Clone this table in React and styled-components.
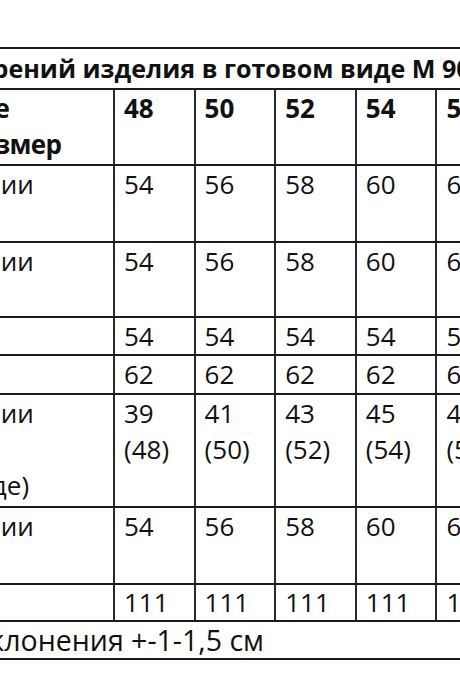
import React from "react";
import styled, { createGlobalStyle } from "styled-components";

const Global = createGlobalStyle`
  html, body { margin: 0; padding: 0; background: #fff; }
  body { overflow: hidden; width: 460px; height: 690px; }
`;

const Page = styled.div`
  width: 460px;
  height: 690px;
  overflow: hidden;
  padding-top: 47px;
  box-sizing: border-box;
`;

const Table = styled.table`
  border-collapse: collapse;
  table-layout: fixed;
  width: 807px;
  margin-left: -210px;
  font-family: "Open Sans", "Noto Sans", sans-serif;
  font-size: 26px;
  color: #111;
`;

const Cell = styled.td`
  border-top: 2px solid #1c1c1c;
  border-bottom: 2px solid #1c1c1c;
  border-left: 2px solid #2a2a2a;
  border-right: 2px solid #2a2a2a;
  padding: 0 0 ${(p) => p.$pad || 0}px 9px;
  line-height: ${(p) => p.$lh || 36}px;
  vertical-align: top;
  white-space: nowrap;
  overflow: visible;
  font-weight: ${(p) => (p.$bold ? 700 : 400)};
`;

const Wide = styled.td`
  border-top: 2px solid #1c1c1c;
  border-bottom: 2px solid #1c1c1c;
  padding: 0;
  vertical-align: top;
  white-space: nowrap;
  overflow: visible;
  text-indent: ${(p) => p.$indent}px;
`;

const TitleCell = styled(Wide)`
  font-weight: 700;
  font-size: 25.1px;
  line-height: 39px;
`;

const NoteCell = styled(Wide)`
  font-size: 28.5px;
  line-height: 36px;
`;

const Line = styled.span`
  display: block;
  letter-spacing: ${(p) => p.$ls || 0}px;
`;

const sizes = [48, 50, 52, 54, 56, 58];

const rows = [
  { label: ["Ширина по линии", "груди"], pad: 3, vals: [54, 56, 58, 60, 62, 64] },
  { label: ["Ширина по линии", "талии"], pad: 1, vals: [54, 56, 58, 60, 62, 64] },
  { label: ["Длина рукава"], pad: 0, vals: [54, 54, 54, 54, 54, 54] },
  { label: ["Длина спинки"], pad: 1, vals: [62, 62, 62, 62, 62, 62] },
  {
    label: ["Ширина по линии", "бедер", "(в закрытом виде)"],
    pad: 3,
    vals: [
      ["39", "(48)"],
      ["41", "(50)"],
      ["43", "(52)"],
      ["45", "(54)"],
      ["47", "(56)"],
      ["49", "(58)"],
    ],
  },
  { label: ["Ширина по линии", "низа"], pad: 3, vals: [54, 56, 58, 60, 62, 64] },
  { label: ["Длина изделия"], pad: 0, lh: 35, vals: [111, 111, 111, 111, 111, 111] },
];

export default function App() {
  return (
    <>
      <Global />
      <Page>
        <Table>
          <colgroup>
            <col style={{ width: 323 }} />
            {sizes.map((s) => (
              <col key={s} style={{ width: 80.6 }} />
            ))}
          </colgroup>
          <tbody>
            <tr>
              <TitleCell colSpan={7} $indent={15}>
                Таблица измерений изделия в готовом виде М 9034
              </TitleCell>
            </tr>
            <tr>
              <Cell $bold $pad={2}>
                <Line>Сопоставление</Line>
                <Line $ls={-0.6}>Российский размер</Line>
              </Cell>
              {sizes.map((s) => (
                <Cell key={s} $bold $pad={2}>
                  {s}
                </Cell>
              ))}
            </tr>
            {rows.map((r, i) => (
              <tr key={i}>
                <Cell $pad={r.pad} $lh={r.lh}>
                  {r.label.map((l, j) => (
                    <Line key={j}>{l}</Line>
                  ))}
                </Cell>
                {r.vals.map((v, j) => (
                  <Cell key={j} $pad={r.pad} $lh={r.lh}>
                    {Array.isArray(v) ? v.map((x, k) => <Line key={k}>{x}</Line>) : v}
                  </Cell>
                ))}
              </tr>
            ))}
            <tr>
              <NoteCell colSpan={7} $indent={-12}>
                Допустимые отклонения +-1-1,5 см
              </NoteCell>
            </tr>
          </tbody>
        </Table>
      </Page>
    </>
  );
}
